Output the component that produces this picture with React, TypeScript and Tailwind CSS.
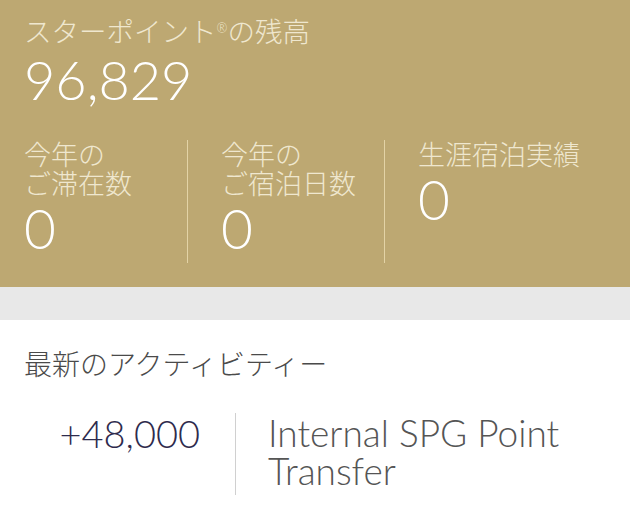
import React from 'react';

const jp = "font-['Lato','Noto_Sans_CJK_JP',sans-serif]";

const stats = [
  { label: ['今年の', 'ご滞在数'], value: '0' },
  { label: ['今年の', 'ご宿泊日数'], value: '0' },
  { label: ['生涯宿泊実績'], value: '0' },
];

export default function App() {
  return (
    <div className={`w-[630px] h-[505px] overflow-hidden bg-white ${jp}`}>
      <div className="bg-[#bda872] px-6 pt-[14px] h-[287px]">
        <div className="text-[27.5px] leading-[36px] font-light text-[#efe7cf] whitespace-nowrap">
          スターポイント<span className="relative -top-[9px] text-[13px] leading-none">®</span>の残高
        </div>
        <div className="text-[54px] leading-[60px] font-light text-white">96,829</div>

        <div className="mt-[30px] grid grid-cols-[163px_197px_1fr]">
          {stats.map((s, i) => (
            <div
              key={i}
              className={`h-[123px] ${i > 0 ? 'border-l border-[#e3d3a6] pl-[33px]' : ''}`}
            >
              <div className="text-[27px] leading-[29px] font-light text-[#efe7cf]">
                {s.label.map((l) => (
                  <div key={l}>{l}</div>
                ))}
              </div>
              <div className="text-[55px] leading-[60px] font-light text-white">{s.value}</div>
            </div>
          ))}
        </div>
      </div>

      <div className="h-[33px] bg-[#e8e8e8]" />

      <div className="px-6 pt-[26px]">
        <div className="text-[28px] leading-[36px] text-[#4a4a4a] font-light whitespace-nowrap">最新のアクティビティー</div>
        <div className="mt-[31px] flex">
          <div className="w-[176px] text-right text-[38px] leading-[40px] font-light text-[#2e2b4d]">
            +48,000
          </div>
          <div className="ml-[35px] border-l border-[#d0d0d0] h-[82px]" />
          <div className="pl-[32px] text-[37px] leading-[38px] font-light text-[#555555] pt-[1px]">
            Internal SPG Point
            <br />
            Transfer
          </div>
        </div>
      </div>
    </div>
  );
}
